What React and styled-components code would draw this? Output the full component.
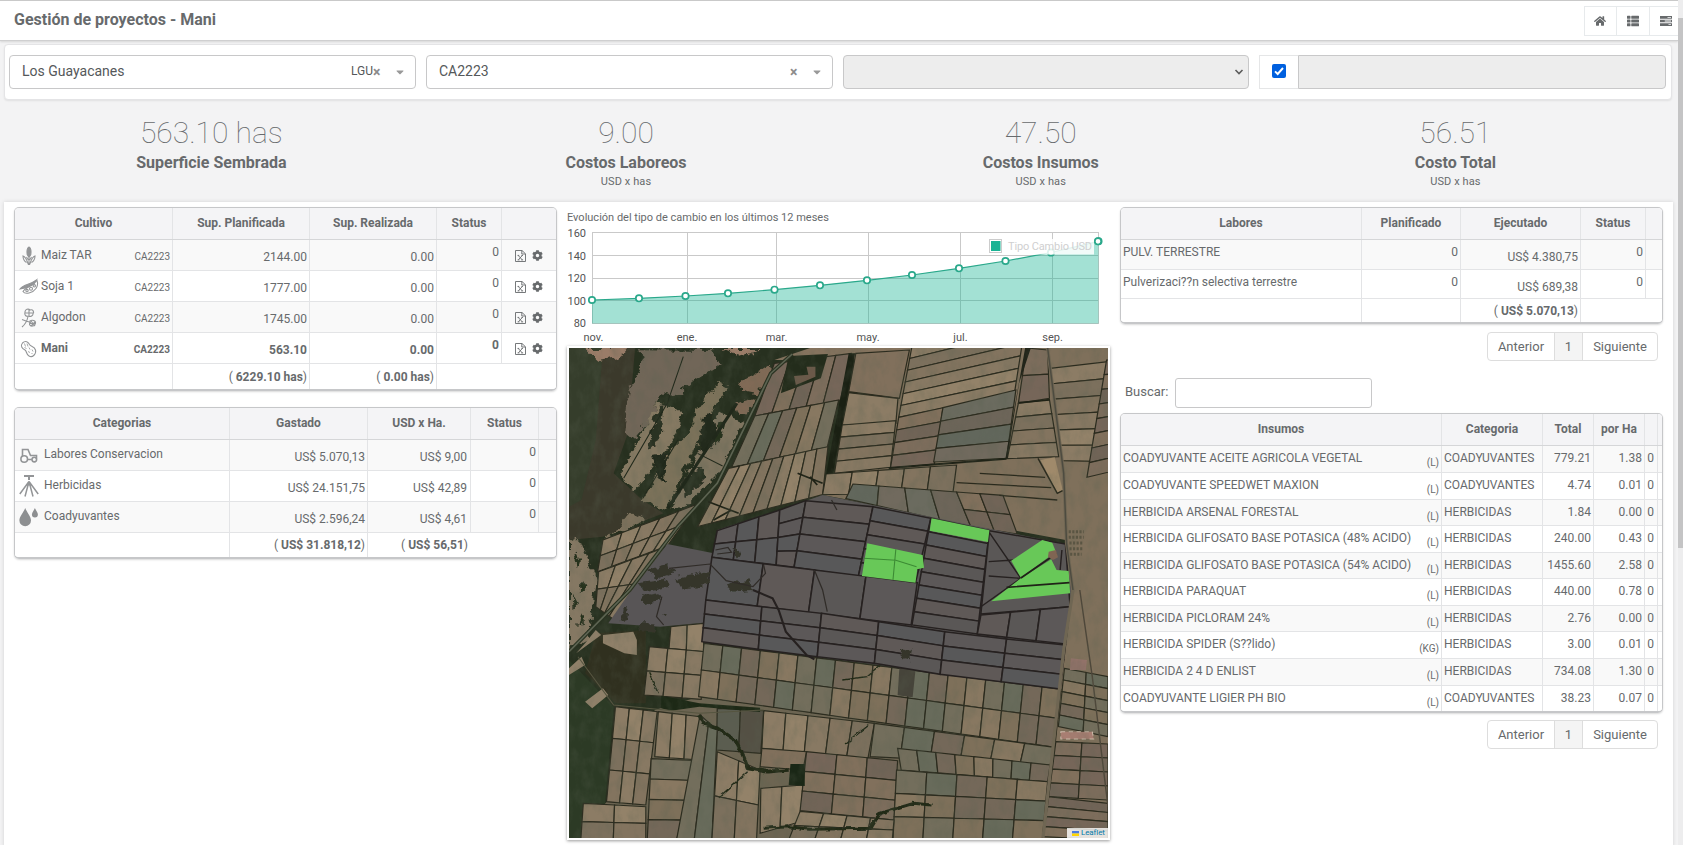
import React from "react";
import styled, { createGlobalStyle } from "styled-components";
import { FaHome, FaThList, FaCog, FaCaretDown } from "react-icons/fa";

const GlobalStyle = createGlobalStyle`
  *, *::before, *::after { box-sizing: border-box; }
  html, body { margin: 0; height: 100%; overflow: hidden; }
  body {
    font-family: Roboto, "Liberation Sans", sans-serif;
    font-size: 12px;
    color: #676a6c;
    background: #f3f3f4;
  }
`;

const Window = styled.div`
  display: flex;
  width: 100%;
  height: 845px;
  overflow: hidden;
`;
const Page = styled.div`
  flex: 1;
  min-width: 0;
  overflow: hidden;
`;
const Scrollbar = styled.div`
  flex: none;
  width: 5px;
  padding-top: 18px;
  background: #ededee;
`;
const Thumb = styled.div`
  height: 530px;
  background: #c4c4c5;
`;

/* header */
const Header = styled.header`
  display: flex;
  justify-content: space-between;
  height: 41px;
  border-top: 1px solid #c9c9c9;
  border-bottom: 1px solid #cfcfd0;
  background: #fff;
  box-shadow: 0 1px 2px rgba(0, 0, 0, 0.12);
`;
const Title = styled.h1`
  margin: 0;
  padding-left: 14px;
  font-size: 16px;
  font-weight: 700;
  line-height: 37px;
`;
const ButtonGroup = styled.div`
  display: flex;
  width: 94px;
  height: 30px;
  margin-top: 5px;
  overflow: hidden;
  border: 1px solid #e7eaec;
  border-right: 0;
`;
const IconButton = styled.button`
  flex: none;
  display: flex;
  align-items: center;
  justify-content: center;
  width: ${(p) => p.$width}px;
  padding: 0 1px 0 0;
  border: 0;
  border-right: 1px solid #e7eaec;
  background: #fff;
  color: #676a6c;
`;

/* filters */
const Filters = styled.section`
  display: grid;
  grid-template-columns: 407px 407px 406px 407px;
  gap: 10px;
  width: 1668px;
  height: 56px;
  margin: 3px 0 0 4px;
  padding: 10px 0 0 4px;
  border: 1px solid #e4e4e6;
  border-radius: 4px;
  background: #fff;
  box-shadow: 0 1px 2px rgba(0, 0, 0, 0.08);
`;
const Select = styled.div`
  display: flex;
  align-items: center;
  height: 34px;
  padding: 0 ${(p) => (p.$disabled ? 4 : 11)}px 0 12px;
  border: 1px solid #c8c8c9;
  border-radius: 4px;
  background: ${(p) => (p.$disabled ? "#ededed" : "#fff")};
  color: #55585a;
`;
const SelectValue = styled.span`
  flex: 1;
  padding-bottom: 2px;
  font-size: 14px;
`;
const SelectCode = styled.span`
  padding-bottom: 3px;
  font-size: 12px;
`;
const Clear = styled.span`
  width: 8px;
  font-size: 14px;
  font-weight: 700;
  color: #8c8c8c;
`;
const Caret = styled(FaCaretDown)`
  width: 8px;
  margin-left: 15px;
  color: #999;
`;
const CheckGroup = styled.div`
  display: flex;
  height: 34px;
`;
const Addon = styled.div`
  display: flex;
  justify-content: center;
  align-items: center;
  width: 39px;
  padding-bottom: 1px;
  border: 1px solid #e5e6e7;
  border-right: 0;
`;
const CheckBox = styled.div`
  display: flex;
  width: 14px;
  height: 14px;
  margin-top: -1px;
  border-radius: 2px;
  background: #0060df;
`;
const DisabledInput = styled.div`
  flex: 1;
  border: 1px solid #c8c8c9;
  border-radius: 0 4px 4px 0;
  background: #ededed;
`;

/* key figures */
const Figures = styled.section`
  display: grid;
  grid-template-columns: repeat(4, 414.7px);
  height: 102px;
  padding: 13px 0 0 4px;
`;
const Figure = styled.div`
  text-align: center;
`;
const FigureValue = styled.div`
  font-size: 30px;
  font-weight: 100;
  line-height: 40px;
`;
const FigureLabel = styled.div`
  font-size: 16px;
  font-weight: 700;
  line-height: 20px;
`;
const FigureUnit = styled.div`
  font-size: 11px;
  line-height: 17px;
  letter-spacing: 0.1px;
`;

/* content */
const Content = styled.main`
  display: grid;
  grid-template-columns: 543px 543px 543px;
  gap: 10px;
  width: 1669px;
  height: 645px;
  margin-left: 4px;
  padding: 5px 0 0 10px;
  background: #fff;
  box-shadow: 0 0 4px rgba(0, 0, 0, 0.14);
`;
const Column = styled.div`
  min-width: 0;
`;
const TableBox = styled.div`
  width: 543px;
  height: ${(p) => p.$height}px;
  margin-bottom: ${(p) => p.$after || 0}px;
  overflow: hidden;
  border: 1px solid #c6c7c9;
  border-bottom-width: 2px;
  border-radius: 5px;
  box-shadow: 0 1px 2px rgba(0, 0, 0, 0.15);
`;
const Row = styled.div`
  display: grid;
  grid-template-columns: ${(p) => p.$cols};
  height: ${(p) => p.$height}px;
  border-bottom: 1px solid #e3e4e6;
  background: ${(p) => (p.$odd ? "#f9f9f9" : "#fff")};
  font-weight: ${(p) => (p.$bold ? 700 : 400)};
  &:last-child { border-bottom: 0; }
`;
const HeadRow = styled(Row)`
  height: 32px;
  border-bottom: 1px solid #d5d6d8;
  background: #f4f4f6;
  font-weight: 700;
`;
const HeadCell = styled.div`
  border-right: 1px solid #e3e4e6;
  line-height: 30px;
  text-align: center;
  white-space: nowrap;
  &:last-child { border-right: 0; }
`;
const Cell = styled.div`
  display: flex;
  justify-content: ${(p) => (p.$right ? "flex-end" : "flex-start")};
  padding: ${(p) => p.$drop || 4}px ${(p) => p.$end || 2}px 0 ${(p) => (p.$right ? 0 : 2)}px;
  border-right: 1px solid #e3e4e6;
  line-height: 16px;
  white-space: nowrap;
  &:last-child { border-right: 0; }
`;
const RowIcon = styled.svg`
  flex: none;
  width: 20px;
  height: 20px;
  margin: -1px ${(p) => p.$gap || 2}px 0 2px;
  overflow: visible;
  fill: none;
  stroke: #939597;
  stroke-width: 1.1;
`;
const Grow = styled.span`
  flex: 1;
`;
const Small = styled.span`
  padding-top: ${(p) => p.$drop}px;
  font-size: 10px;
`;
const Actions = styled.div`
  display: flex;
  align-items: flex-start;
  gap: 6px;
  padding: 10px 0 0 13px;
`;
const Plain = styled.span`
  font-weight: 400;
  white-space: pre;
`;
const Pager = styled.nav`
  display: flex;
  width: 171px;
  height: 29px;
  margin: ${(p) => p.$before || 0}px 5px ${(p) => p.$after || 0}px auto;
  border: 1px solid #ddd;
  border-radius: 4px;
  font-size: 13px;
  line-height: 27px;
  text-align: center;
`;
const PagerItem = styled.span`
  width: ${(p) => p.$width}px;
  border-right: 1px solid #ddd;
  background: ${(p) => (p.$current ? "#f4f4f4" : "transparent")};
  &:last-child { border-right: 0; }
`;
const Search = styled.label`
  display: flex;
  align-items: center;
  gap: 7px;
  height: 30px;
  margin-bottom: 5px;
  padding-left: 5px;
  font-size: 13px;
`;
const SearchText = styled.span`
  padding-bottom: 4px;
`;
const SearchInput = styled.input`
  width: 197px;
  height: 30px;
  border: 1px solid #c8c8c9;
  border-radius: 3px;
  background: #fff;
`;

/* chart and map */
const ChartTitle = styled.div`
  height: 16px;
  font-size: 11px;
  line-height: 21px;
`;
const Chart = styled.svg`
  display: block;
  width: 543px;
  height: 123px;
  font-family: Roboto, sans-serif;
  font-size: 11px;
  fill: #545454;
`;
const MapFrame = styled.div`
  position: relative;
  width: 543px;
  height: 494px;
  padding: 2px;
  background: #fff;
  box-shadow: 0 1px 3px rgba(0, 0, 0, 0.4);
`;
const MapDrawing = styled.svg`
  display: block;
  width: 539px;
  height: 490px;
`;
const Attribution = styled.div`
  position: absolute;
  right: 2px;
  bottom: 2px;
  display: flex;
  align-items: center;
  gap: 2px;
  width: 41px;
  height: 10px;
  padding-left: 5px;
  background: rgba(255, 255, 255, 0.8);
  color: #0078a8;
  font-size: 8px;
  line-height: 10px;
  letter-spacing: -0.1px;
`;

function Tasks() {
  return (
    <svg width="12" height="10" viewBox="0 0 24 20" fill="#676a6c">
      <path d="M0 0h24v5.4H0zM0 7.3h24v5.4H0zM0 14.6h24V20H0z" />
      <path d="M15 2h7v1.6h-7zM9.5 9.2H22v1.6H9.5zM17 16.5h5v1.6h-5z" fill="#fff" />
    </svg>
  );
}

function ExcelFile() {
  return (
    <svg width="11" height="12" viewBox="0 0 11 12" fill="none" stroke="#676a6c">
      <path d="M.5.5h6.500l3.500 3.300v7.700H.5zM6.800.6v3.400h3.600" strokeWidth=".9" />
      <path d="M3.200 5.400l4 4.400M7.400 5.400l-4 4.400M2.600 9.900h1.900M6.200 9.900h1.900M2.600 5.400h1.600M6.400 5.400H8" strokeWidth=".9" />
    </svg>
  );
}

const CROP_ICONS = {
  corn: (
    <>
      <path d="M10 1c2 1 2.300 4 1.800 7.500L10 11.500 8.200 8.500C7.700 5 8 2 10 1z" fill="#939597" />
      <path d="M9.500 18.500c-1-1-1.500-7-5.500-8.500 0 3 1 5 3.500 6.500M10.500 18.500c1-1 1.500-7 5.500-8.500 0 3-1 5-3.500 6.500M10 12v7M7.500 11c1 2 1.500 3 2.500 3s1.500-1 2.500-3" />
    </>
  ),
  soy: (
    <>
      <path d="M1 12c4-5 10-4 16.500-9-2 5-9 8-16.500 9z" fill="#939597" />
      <path d="M4 14.500C6 10.500 13 9 18 3.500c2 6-2 11-8 12.500-3 .7-5 0-6-1.500z" />
      <circle cx="8" cy="13.600" r="1.200" />
      <circle cx="12" cy="11.800" r="1.500" />
      <circle cx="15.300" cy="8.800" r="1.200" />
    </>
  ),
  cotton: (
    <>
      <path d="M6 4c0-3 3.500-3.500 5-2 3-1 4.500 2 3 4 0 2-3 3-4 2-3 1-5-1-4-4zM10 1.500v7M6 5h8.500M9 8.500c-1 5-3 8-6 10.500M3 11.500l4 1.500 5 1.500" />
      <path d="M11 13c2-1.500 6-.5 5.500 2.500-.5 3-5 3.500-6 1zM12 13l4 5M16.500 13.500L12 18M11 15.500h5" />
    </>
  ),
  peanut: (
    <>
      <path d="M3.500 4c3-3 6-1 7 1.500 1 2 5 1.500 6 5.500 1 4-3 8-6.500 6-3-1.800-2-4.500-4-6C3 9.500 1 7 3.500 4z" />
      <path d="M5.500 4.500l1 3M8 4.500l1 3M5.500 8.500l2 1M10 8.500l1 2M13 10.500l1 2M9.500 12l1 2M12.500 14l1 1" strokeWidth=".8" />
    </>
  ),
  tractor: (
    <g strokeWidth="1.600">
      <circle cx="5.200" cy="14" r="3.300" />
      <circle cx="15.300" cy="14.600" r="2.300" />
      <path d="M3.500 11V4.500h5.500l2.500 6h6v3M8.700 14.500h4.200" />
    </g>
  ),
  spray: (
    <g strokeWidth="1.500">
      <path d="M5 0h10M10 0v4" strokeWidth="2" />
      <path d="M10 5.500L.8 18M10 5.500L6 20.500M10 5.500L14 20.500M10 5.500L19.200 18" />
      <path d="M10 5l-3 4.500h6z" fill="#939597" stroke="none" />
    </g>
  ),
  drops: (
    <path
      d="M6.200 1c1.800 4.500 5.800 8.500 5.800 12.500a5.800 5.800 0 0 1-11.600 0C.4 9.500 4.500 5.500 6.200 1zM15.900 1c1 2.500 3 4.500 3 6.500a3 3 0 0 1-6 0c0-2 2-4 3-6.500z"
      fill="#8d8f91"
      stroke="none"
    />
  ),
};

const CROPS = [
  { icon: "corn", name: "Maiz TAR", planned: "2144.00" },
  { icon: "soy", name: "Soja 1", planned: "1777.00" },
  { icon: "cotton", name: "Algodon", planned: "1745.00" },
  { icon: "peanut", name: "Mani", planned: "563.10", bold: true },
];
const CATEGORIES = [
  ["tractor", "Labores Conservacion", "US$ 5.070,13", "US$ 9,00"],
  ["spray", "Herbicidas", "US$ 24.151,75", "US$ 42,89"],
  ["drops", "Coadyuvantes", "US$ 2.596,24", "US$ 4,61"],
];
const LABORES = [
  ["PULV. TERRESTRE", "US$ 4.380,75", 30],
  ["Pulverizaci??n selectiva terrestre", "US$ 689,38", 29],
];
const INSUMOS = [
  ["COADYUVANTE ACEITE AGRICOLA VEGETAL", "(L)", "COADYUVANTES", "779.21", "1.38", 27],
  ["COADYUVANTE SPEEDWET MAXION", "(L)", "COADYUVANTES", "4.74", "0.01", 27],
  ["HERBICIDA ARSENAL FORESTAL", "(L)", "HERBICIDAS", "1.84", "0.00", 26],
  ["HERBICIDA GLIFOSATO BASE POTASICA (48% ACIDO)", "(L)", "HERBICIDAS", "240.00", "0.43", 27],
  ["HERBICIDA GLIFOSATO BASE POTASICA (54% ACIDO)", "(L)", "HERBICIDAS", "1455.60", "2.58", 26],
  ["HERBICIDA PARAQUAT", "(L)", "HERBICIDAS", "440.00", "0.78", 27],
  ["HERBICIDA PICLORAM 24%", "(L)", "HERBICIDAS", "2.76", "0.00", 26],
  ["HERBICIDA SPIDER (S??lido)", "(KG)", "HERBICIDAS", "3.00", "0.01", 27],
  ["HERBICIDA 2 4 D ENLIST", "(L)", "HERBICIDAS", "734.08", "1.30", 27],
  ["COADYUVANTE LIGIER PH BIO", "(L)", "COADYUVANTES", "38.23", "0.07", 27],
];
const FIGURES = [
  ["563.10 has", "Superficie Sembrada", ""],
  ["9.00", "Costos Laboreos", "USD x has"],
  ["47.50", "Costos Insumos", "USD x has"],
  ["56.51", "Costo Total", "USD x has"],
];

const CROP_COLS = "158px 137px 127px 65px 1fr";
const CATEGORY_COLS = "215px 138px 103px 68px 1fr";
const LABOR_COLS = "241px 99px 120px 65px 1fr";
const INPUT_COLS = "321px 101px 51px 51px 13px 1fr";

function Head({ cols, labels }) {
  return (
    <HeadRow $cols={cols}>
      {labels.map((l, i) => (
        <HeadCell key={i}>{l}</HeadCell>
      ))}
    </HeadRow>
  );
}

function CropTable() {
  return (
    <TableBox $height={184} $after={16}>
      <Head cols={CROP_COLS} labels={["Cultivo", "Sup. Planificada", "Sup. Realizada", "Status", ""]} />
      {CROPS.map((c, i) => (
        <Row key={c.name} $cols={CROP_COLS} $height={31} $odd={i % 2 === 0} $bold={c.bold}>
          <Cell $drop={7}>
            <RowIcon viewBox="0 0 20 20">{CROP_ICONS[c.icon]}</RowIcon>
            <Grow>{c.name}</Grow>
            <Small $drop={2}>CA2223</Small>
          </Cell>
          <Cell $right $drop={9}>{c.planned}</Cell>
          <Cell $right $drop={9}>0.00</Cell>
          <Cell $right $drop={4}>0</Cell>
          <Actions>
            <ExcelFile />
            <FaCog size={11} />
          </Actions>
        </Row>
      ))}
      <Row $cols={CROP_COLS} $height={26} $bold>
        <Cell $drop={5} />
        <Cell $right $drop={5}><Plain>( </Plain>6229.10 has<Plain>)</Plain></Cell>
        <Cell $right $drop={5}><Plain>( </Plain>0.00 has<Plain>)</Plain></Cell>
        <Cell />
      </Row>
    </TableBox>
  );
}

function CategoryTable() {
  return (
    <TableBox $height={152}>
      <Head cols={CATEGORY_COLS} labels={["Categorias", "Gastado", "USD x Ha.", "Status", ""]} />
      {CATEGORIES.map(([icon, name, spent, perHa], i) => (
        <Row key={name} $cols={CATEGORY_COLS} $height={31} $odd={i % 2 === 0}>
          <Cell $drop={6}>
            <RowIcon viewBox="0 0 20 20" $gap={5}>{CROP_ICONS[icon]}</RowIcon>
            {name}
          </Cell>
          <Cell $right $drop={9}>{spent}</Cell>
          <Cell $right $drop={9} $end={3}>{perHa}</Cell>
          <Cell $right $drop={4}>0</Cell>
          <Cell />
        </Row>
      ))}
      <Row $cols={CATEGORY_COLS} $height={25} $bold>
        <Cell />
        <Cell $right><Plain>( </Plain>US$ 31.818,12<Plain>)</Plain></Cell>
        <Cell $right $end={3}><Plain>( </Plain>US$ 56,51<Plain>)</Plain></Cell>
      </Row>
    </TableBox>
  );
}

function LaborTable() {
  return (
    <TableBox $height={117} $after={8}>
      <Head cols={LABOR_COLS} labels={["Labores", "Planificado", "Ejecutado", "Status", ""]} />
      {LABORES.map(([name, spent, height], i) => (
        <Row key={name} $cols={LABOR_COLS} $height={height} $odd={i % 2 === 0}>
          <Cell>{name}</Cell>
          <Cell $right>0</Cell>
          <Cell $right $drop={9}>{spent}</Cell>
          <Cell $right>0</Cell>
          <Cell />
        </Row>
      ))}
      <Row $cols={LABOR_COLS} $height={25} $bold>
        <Cell />
        <Cell />
        <Cell $right><Plain>( </Plain>US$ 5.070,13<Plain>)</Plain></Cell>
        <Cell />
      </Row>
    </TableBox>
  );
}

function InputTable() {
  return (
    <TableBox $height={300} $after={7}>
      <Head cols={INPUT_COLS} labels={["Insumos", "Categoria", "Total", "por Ha", "", ""]} />
      {INSUMOS.map(([name, unit, category, total, perHa, height], i) => (
        <Row key={name} $cols={INPUT_COLS} $height={height} $odd={i % 2 === 0}>
          <Cell>
            <Grow>{name}</Grow>
            <Small $drop={5}>{unit}</Small>
          </Cell>
          <Cell>{category}</Cell>
          <Cell $right>{total}</Cell>
          <Cell $right>{perHa}</Cell>
          <Cell $right $end={3}>0</Cell>
          <Cell />
        </Row>
      ))}
    </TableBox>
  );
}

function Pagination({ after }) {
  return (
    <Pager $after={after}>
      <PagerItem $width={67}>Anterior</PagerItem>
      <PagerItem $width={28} $current>1</PagerItem>
      <PagerItem $width={74}>Siguiente</PagerItem>
    </Pager>
  );
}

const POINTS = [
  [25, 77], [72, 75.300], [118.500, 73], [161, 70.300], [207.500, 66.700], [253, 62.300],
  [300, 57.300], [345, 52], [392, 45.300], [438.500, 38], [484, 29.500], [531.500, 18.300],
];

function RateChart() {
  const line = POINTS.map((p) => p.join(",")).join(" ");
  return (
    <Chart viewBox="0 0 543 123">
      <g stroke="#c9c9c9" strokeWidth="1">
        {[9.5, 32.5, 55.5, 77.5, 100.5].map((y) => <path key={y} d={`M25 ${y}H532`} />)}
        {[25.5, 120.5, 209.5, 301.5, 393.5, 485.5, 531.5].map((x) => <path key={x} d={`M${x} 9V101`} />)}
      </g>
      <polygon points={`25,100.500 ${line} 531.500,100.500`} fill="rgba(26,179,148,0.4)" />
      <polyline points={line} fill="none" stroke="#2aa88b" strokeWidth="1.200" />
      <g fill="#fff" stroke="#2aa88b" strokeWidth="1.700">
        {POINTS.map(([x, y]) => <circle key={x} cx={x} cy={y} r="3.200" />)}
      </g>
      <rect x="422" y="16" width="105" height="15.500" fill="#fff" fillOpacity="0.85" />
      <rect x="422.500" y="16.500" width="12" height="13" fill="#fff" stroke="#ccc" />
      <rect x="424" y="18" width="9.500" height="10" fill="#1ab394" />
      <text x="441" y="27" fill="#cfcfd0" textLength="84">Tipo Cambio USD</text>
      <circle cx="531" cy="18.300" r="3.200" fill="#fff" stroke="#2aa88b" strokeWidth="1.700" />
      <g textAnchor="end">
        {["160", "140", "120", "100", "80"].map((t, i) => <text key={t} x="19" y={14 + i * 22.6}>{t}</text>)}
      </g>
      <g textAnchor="middle">
        <text x="26.500" y="118">nov.</text>
        <text x="120" y="118">ene.</text>
        <text x="209.500" y="118">mar.</text>
        <text x="301" y="118">may.</text>
        <text x="393.500" y="118">jul.</text>
        <text x="485.500" y="118">sep.</text>
      </g>
    </Chart>
  );
}

const TAN = ["#8c7c65", "#83745f", "#938269", "#7c705d", "#887963"];
const BROWN = ["#766659", "#7d6d5c", "#716457", "#81705c"];
const MIX = ["#736e5c", "#7e705a", "#686b5b", "#887861", "#746859"];
const TEAL = ["#6b6b5f", "#716a5e", "#62675c", "#6d6559"];
const GREY = ["#5c5858", "#5a5756", "#5f5957", "#585859"];

/* corners run clockwise from the top left: [tl, tr, br, bl, columns, rows, palette] */
const BLOCKS = [
  [[600, 70], [815, 40], [785, 180], [545, 228], 5, 1, BROWN],
  [[545, 228], [780, 180], [748, 322], [480, 382], 6, 1, MIX],
  [[472, 385], [750, 320], [735, 464], [385, 560], 9, 1, TAN],
  [[828, 40], [978, 30], [950, 175], [808, 155], 1, 1, BROWN],
  [[808, 158], [946, 175], [940, 250], [790, 255], 1, 1, TAN],
  [[790, 255], [940, 242], [925, 382], [768, 400], 1, 4, TAN],
  [[985, 20], [1305, -65], [1272, 160], [948, 232], 1, 6, TAN],
  [[948, 232], [1072, 203], [1048, 372], [925, 384], 1, 4, BROWN],
  [[1072, 203], [1276, 150], [1250, 355], [1046, 366], 1, 4, TEAL],
  [[1306, 24], [1365, 30], [1370, 175], [1283, 190], 1, 2, BROWN],
  [[1283, 190], [1370, 178], [1396, 350], [1252, 356], 1, 4, TAN],
  [[1372, 85], [1534, 65], [1534, 365], [1405, 362], 1, 6, TAN],
  [[1530, 60], [1560, 60], [1560, 390], [1475, 412], 1, 8, BROWN],
  [[745, 402], [1110, 375], [1100, 458], [735, 464], 5, 1, TAN],
  [[820, 432], [1110, 456], [1150, 560], [800, 476], 4, 1, TEAL],
  [[1110, 456], [1240, 466], [1280, 582], [1150, 560], 2, 2, BROWN],
  [[120, 600], [385, 492], [300, 618], [105, 695], 5, 2, TAN],
  [[108, 695], [295, 622], [150, 838], [100, 800], 4, 2, TAN],
  [[310, 860], [402, 850], [402, 935], [305, 925], 2, 1, TAN],
  [[250, 920], [405, 935], [395, 1078], [235, 1065], 3, 2, TAN],
  [[403, 910], [1402, 1048], [1385, 1222], [388, 1070], 19, 2, MIX],
  [[570, 1112], [880, 1150], [862, 1255], [565, 1225], 5, 1, TAN],
  [[440, 1105], [570, 1112], [562, 1240], [438, 1230], 2, 1, ["#5b5d50", "#545044"]],
  [[880, 1150], [1385, 1222], [1372, 1275], [868, 1250], 6, 1, MIX],
  [[155, 1100], [272, 1115], [240, 1395], [130, 1385], 3, 3, TAN],
  [[275, 1115], [392, 1130], [388, 1260], [265, 1250], 3, 1, TAN],
  [[255, 1256], [388, 1262], [326, 1500], [244, 1500], 1, 4, MIX],
  [[65, 1390], [240, 1400], [240, 1500], [58, 1500], 2, 2, TAN],
  [[392, 1125], [440, 1170], [425, 1500], [326, 1500], 2, 1, MIX],
  [[440, 1235], [560, 1290], [550, 1500], [425, 1500], 2, 2, TAN],
  [[562, 1345], [680, 1335], [672, 1445], [560, 1480], 2, 1, TAN],
  [[565, 1225], [690, 1235], [680, 1290], [560, 1280], 1, 1, BROWN],
  [[690, 1235], [945, 1262], [935, 1440], [672, 1412], 3, 3, BROWN],
  [[945, 1225], [1372, 1275], [1365, 1325], [955, 1290], 8, 1, MIX],
  [[942, 1290], [1365, 1325], [1350, 1500], [932, 1500], 5, 3, MIX],
  [[672, 1414], [935, 1440], [930, 1500], [640, 1500], 4, 2, TAN],
  [[1412, 985], [1534, 1010], [1534, 1190], [1395, 1160], 2, 5, MIX],
  [[1388, 1205], [1534, 1212], [1534, 1380], [1368, 1370], 2, 4, BROWN],
  [[1368, 1370], [1534, 1390], [1534, 1500], [1352, 1490], 1, 4, BROWN],
];

const ESTATE = [
  [[440, 572], [615, 510], [605, 675], [425, 652], 3, 2],
  [[615, 510], [688, 482], [655, 682], [605, 675], 1, 4],
  [[688, 482], [876, 500], [835, 710], [655, 682], 1, 4],
  [[876, 500], [1038, 535], [995, 728], [835, 710], 1, 5],
  [[1038, 535], [1202, 572], [1168, 882], [985, 855], 1, 8],
  [[1202, 572], [1415, 612], [1428, 800], [1178, 822], 1, 1],
  [[1178, 825], [1428, 800], [1415, 912], [1168, 882], 3, 1],
  [[425, 652], [1000, 728], [983, 855], [408, 780], 4, 1],
  [[408, 780], [565, 800], [555, 928], [397, 905], 1, 3],
  [[565, 800], [732, 820], [720, 950], [555, 928], 1, 3],
  [[732, 820], [892, 845], [880, 970], [720, 950], 1, 3],
  [[892, 845], [1077, 875], [1064, 1003], [880, 970], 1, 3],
  [[1077, 875], [1250, 897], [1235, 1025], [1064, 1003], 1, 3],
  [[1250, 897], [1415, 915], [1400, 1047], [1235, 1025], 1, 3],
];

function at([tl, tr, br, bl], u, v) {
  const mix = (k) =>
    (tl[k] * (1 - u) + tr[k] * u) * (1 - v) + (bl[k] * (1 - u) + br[k] * u) * v;
  return `${mix(0).toFixed(1)},${mix(1).toFixed(1)}`;
}

function Fields({ block, index, palette, stroke, width }) {
  const [tl, tr, br, bl, cols, rows] = block;
  const quad = [tl, tr, br, bl];
  const cells = [];
  for (let r = 0; r < rows; r++) {
    for (let c = 0; c < cols; c++) {
      const pts = [
        at(quad, c / cols, r / rows),
        at(quad, (c + 1) / cols, r / rows),
        at(quad, (c + 1) / cols, (r + 1) / rows),
        at(quad, c / cols, (r + 1) / rows),
      ].join(" ");
      const shade = palette[(c * 7 + r * 3 + index * 5 + ((c * r) % 3)) % palette.length];
      cells.push(<polygon key={`${r}-${c}`} points={pts} fill={shade} />);
    }
  }
  return <g stroke={stroke} strokeWidth={width}>{cells}</g>;
}

function SatelliteMap() {
  return (
    <MapDrawing viewBox="25 24 1509 1470" preserveAspectRatio="none">
      <defs>
        <filter id="grain" x="0" y="0" width="100%" height="100%">
          <feTurbulence type="fractalNoise" baseFrequency="0.035 0.02" numOctaves="5" seed="7" />
          <feColorMatrix values="0 0 0 0 0.1  0 0 0 0 0.12  0 0 0 0 0.08  0 2 0 0 -0.8" />
        </filter>
        <filter id="ragged" x="-5%" y="-5%" width="110%" height="110%">
          <feTurbulence type="fractalNoise" baseFrequency="0.045" numOctaves="4" seed="3" result="n" />
          <feDisplacementMap in="SourceGraphic" in2="n" scale="28" xChannelSelector="R" yChannelSelector="G" />
        </filter>
        <filter id="wobble" x="-5%" y="-5%" width="110%" height="110%">
          <feTurbulence type="fractalNoise" baseFrequency="0.05" numOctaves="2" seed="5" result="n" />
          <feDisplacementMap in="SourceGraphic" in2="n" scale="12" xChannelSelector="R" yChannelSelector="G" />
        </filter>
      </defs>
      <rect x="25" y="24" width="1509" height="1470" fill="#27301f" />
      <path d="M25 24H210L190 280 150 400 230 480 290 520 120 590 25 600z" fill="#3b392b" />
      <path d="M25 24H120L100 300 60 480 25 500z" fill="#353d2b" />
      <path d="M25 960L150 1100 125 1400 60 1494H25z" fill="#2c3a25" />
      <path d="M100 880L240 870 240 1090 155 1090 70 1000z" fill="#30301f" />
      <path d="M940 24H1534V1494H1340L1430 760 1415 600 735 465 770 400z" fill="#7f705b" />
      <path d="M600 60L700 24H980L830 60z" fill="#85735e" />
      <path d="M388 1070L1400 1225 1350 1494H60L130 1385 265 1110z" fill="#6d6552" />

      <g filter="url(#ragged)">
        <path d="M225 28L430 30 448 75 380 120 325 168 285 160 250 240 205 300 182 280 195 150 230 70z" fill="#716658" />
        <path d="M275 185L345 215 325 290 290 340 210 450 165 410 245 245z" fill="#857962" />
        <path d="M445 125L470 140 425 215 380 310 300 510 230 480 300 340 360 280 385 200z" fill="#7c725a" />
        <path d="M445 215L515 250 450 390 350 500 310 505 385 340z" fill="#7f7561" />
        <path d="M500 130L590 70 595 110 555 160 510 150zM490 195L545 175 530 215 500 225z" fill="#816a57" />
        <path d="M70 24L190 24 170 50 110 62zM450 24H560L520 50z" fill="#9a7b68" />
        <path d="M25 590L60 610 100 720 78 900 25 930z" fill="#857864" />
        <path d="M200 515L245 540 130 590 125 610z" fill="#7d715b" />
        <path d="M400 230L425 220 440 290 410 340 390 330zM255 350L300 340 290 430z" fill="#232a1c" />
        <path d="M345 420L395 380 410 410 345 480zM270 215L290 190 280 300 245 330z" fill="#2b3022" />
        <path d="M40 640l15 10-8 30zM60 720l18 20-20 20zM35 760l15 30-12 20zM60 820l10 20-20 25zM440 250l20-10-10 60-20 20z" fill="#27301f" />
      </g>
      <g fill="none" stroke="#20281a">
        <path d="M302 505L495 190" strokeWidth="9" />
        <path d="M178 415L300 190 345 50M232 475L330 300M385 340L455 378" strokeWidth="3" />
      </g>
      <path d="M45 940L115 885 100 870 70 910M120 885L205 875 215 900 215 945 180 940 120 910zM70 1085L120 1045 135 1065 90 1105zM25 985L60 950 70 975 25 1005z" fill="#8f8069" />

      {BLOCKS.map((b, i) => (
        <Fields key={i} block={b} index={i} palette={b[6]} stroke="#2b2b1e" width={3.4} />
      ))}
      <path d="M640 48L750 42 730 115 618 160z" fill="#232c1b" />
      <path d="M655 108L695 104 690 80 715 80 715 110 660 135z" fill="#6b5949" />
      <path d="M808 40H826L764 400 745 402z" fill="#1a2013" />
      <path d="M1302 24H1318L1285 130 1252 356 1247 355z" fill="#22251a" />
      <path d="M920 384L1250 356" fill="none" stroke="#1f2216" strokeWidth="6" />
      <path d="M1345 360L1385 352 1407 450 1392 458z" fill="#a08a6b" />
      <path d="M1338 355L1392 460 1407 452M1175 400L1358 412M1110 428L1375 443M1230 466L1392 480" fill="none" stroke="#29291c" strokeWidth="4" />
      <path d="M1285 188L1370 180M665 400L735 430M700 410l20 25M415 485L500 520M430 540l50-30" stroke="#1f2216" strokeWidth="5" />

      <path d="M1455 750L1490 1010 1534 1400" fill="none" stroke="#4e473a" strokeWidth="4" />
      <path d="M1430 955l45 5-3 30-45 0z" fill="#94736a" />
      <path d="M1402 1175l88 0 4 22-92 0z" fill="#a87e72" stroke="#cab9a8" strokeWidth="3" strokeDasharray="12 10" />
      <path d="M283 1067L390 1090 560 1103 560 1116 390 1100 310 1112 283 1105z" fill="#1d2916" />
      <path d="M645 1272h40v66l-45-3z" fill="#1a2716" />
      <g fill="none" stroke="#212a19" strokeLinejoin="round" filter="url(#wobble)">
        <path d="M390 1125L400 1150 440 1165 490 1200 512 1245 525 1285 580 1295 640 1290" strokeWidth="11" />
        <path d="M570 1465L640 1460 700 1468 870 1465 895 1420 990 1390 1040 1395" strokeWidth="9" />
        <path d="M525 1295L445 1372M248 1000L275 1060M790 1020L860 1010 912 962M865 1155L798 1212" strokeWidth="4" />
      </g>
      <path d="M950 985l45 5-8 82-42-6z" fill="#46443a" />
      <rect x="25" y="24" width="1509" height="1470" filter="url(#grain)" opacity="0.28" />

      <path d="M735 465L1415 612 1432 760 1400 1047 397 905 425 650 440 570 615 510z" fill="#5a5756" />
      <path d="M300 612L430 640 400 848 280 860 135 850 190 765z" fill="#585556" />
      {ESTATE.map((b, i) => (
        <Fields key={i} block={b} index={i} palette={GREY} stroke="#262120" width={4.4} />
      ))}
      <g fill="#35362c" filter="url(#ragged)">
        <path d="M240 690l60-15 20 20-50 20zM220 730l70-10 20 20-80 15zM325 715l90-20 5 35-80 15zM230 770l45-8 8 22-50 8zM175 810l15-10-5 40-12 5zM230 850h40l-5 25-45-5zM285 820l20 10-5 10z" />
        <path d="M485 625l20 10-10 20zM470 735l60-15 10 30-60 5zM955 925l30 5-5 28-27-5z" />
      </g>
      <path d="M540 750L595 775 612 810 632 875 690 945 712 958" fill="none" stroke="#262120" strokeWidth="6" />
      <path d="M305 685L420 672 465 722 540 740 575 700 570 675M285 770L270 830 290 855M712 690L735 750 748 815M760 480L775 510M435 630l35-8 10 15-40 5" fill="none" stroke="#302c28" strokeWidth="3.500" />
      <path d="M1202 578L1290 715 1178 800M1290 715L1200 708M1270 660L1200 665M1405 630L1400 690" fill="none" stroke="#262120" strokeWidth="4" />

      <g fill="#68c858">
        <path d="M1040 535L1202 571 1198 606 1035 572z" />
        <path d="M860 610L1015 645 1019 683 1000 688 995 728 845 708z" />
        <path d="M1263 662L1350 600 1378 608 1388 635 1290 713z" />
        <path d="M1375 658L1390 690 1424 693 1428 760 1207 784 1290 715z" />
      </g>
      <path d="M940 628L932 720M850 655L940 661 998 680" fill="none" stroke="#3c8a34" strokeWidth="3" />
      <path d="M1250 742L1426 728M1290 714L1390 640" stroke="#202218" strokeWidth="5" />
      <path d="M1368 635l20-5 6 22-14 8-14-10z" fill="#806553" />

      <path d="M1365 24L1410 400 1418 610 1436 750 1410 930 1352 1494" fill="none" stroke="#6f6653" strokeWidth="9" />
      <path d="M1365 24L1410 400 1418 610 1436 750" fill="none" stroke="#4d4b40" strokeWidth="4" />
      <path d="M650 42L590 100 440 430 330 560 195 750 25 935" fill="none" stroke="#2b3322" strokeWidth="11" />
      <path d="M650 42L590 100 440 430 330 560 195 750 25 935" fill="none" stroke="#5d6452" strokeWidth="4.500" />
      <path d="M50 950L150 1095 390 1120 570 1110" fill="none" stroke="#565540" strokeWidth="3" />
      <path d="M1424 575H1466M1424 592H1466M1426 609H1466M1426 626H1464M1428 643H1460" stroke="#5a5543" strokeWidth="9" strokeDasharray="6 4" />
    </MapDrawing>
  );
}

export default function App() {
  return (
    <Window>
      <GlobalStyle />
      <Page>
        <Header>
          <Title>Gestión de proyectos - Mani</Title>
          <ButtonGroup>
            <IconButton $width={32}><FaHome size={12} /></IconButton>
            <IconButton $width={33}><FaThList size={12} /></IconButton>
            <IconButton $width={34}><Tasks /></IconButton>
          </ButtonGroup>
        </Header>
        <Filters>
          <Select>
            <SelectValue>Los Guayacanes</SelectValue>
            <SelectCode>LGU</SelectCode>
            <Clear>×</Clear>
            <Caret />
          </Select>
          <Select>
            <SelectValue>CA2223</SelectValue>
            <Clear>×</Clear>
            <Caret />
          </Select>
          <Select $disabled>
            <Grow />
            <svg width="10" height="8" viewBox="0 0 10 8" fill="none" stroke="#5c5c5c" strokeWidth="1.600">
              <path d="M1.500 2L5 5.500 8.500 2" />
            </svg>
          </Select>
          <CheckGroup>
            <Addon>
              <CheckBox>
                <svg width="14" height="14" viewBox="0 0 14 14" fill="none" stroke="#fff" strokeWidth="1.900">
                  <path d="M3 7.300l2.700 2.700L11 4" />
                </svg>
              </CheckBox>
            </Addon>
            <DisabledInput />
          </CheckGroup>
        </Filters>
        <Figures>
          {FIGURES.map(([value, label, unit]) => (
            <Figure key={label}>
              <FigureValue>{value}</FigureValue>
              <FigureLabel>{label}</FigureLabel>
              <FigureUnit>{unit}</FigureUnit>
            </Figure>
          ))}
        </Figures>
        <Content>
          <Column>
            <CropTable />
            <CategoryTable />
          </Column>
          <Column>
            <ChartTitle>Evolución del tipo de cambio en los últimos 12 meses</ChartTitle>
            <RateChart />
            <MapFrame>
              <SatelliteMap />
              <Attribution>
                <svg width="7" height="5" viewBox="0 0 7 5">
                  <path d="M0 0h7v2.500H0z" fill="#4c7be1" />
                  <path d="M0 2.500h7V5H0z" fill="#ffd500" />
                </svg>
                Leaflet
              </Attribution>
            </MapFrame>
          </Column>
          <Column>
            <LaborTable />
            <Pagination after={17} />
            <Search>
              <SearchText>Buscar:</SearchText>
              <SearchInput />
            </Search>
            <InputTable />
            <Pagination />
          </Column>
        </Content>
      </Page>
      <Scrollbar>
        <Thumb />
      </Scrollbar>
    </Window>
  );
}
